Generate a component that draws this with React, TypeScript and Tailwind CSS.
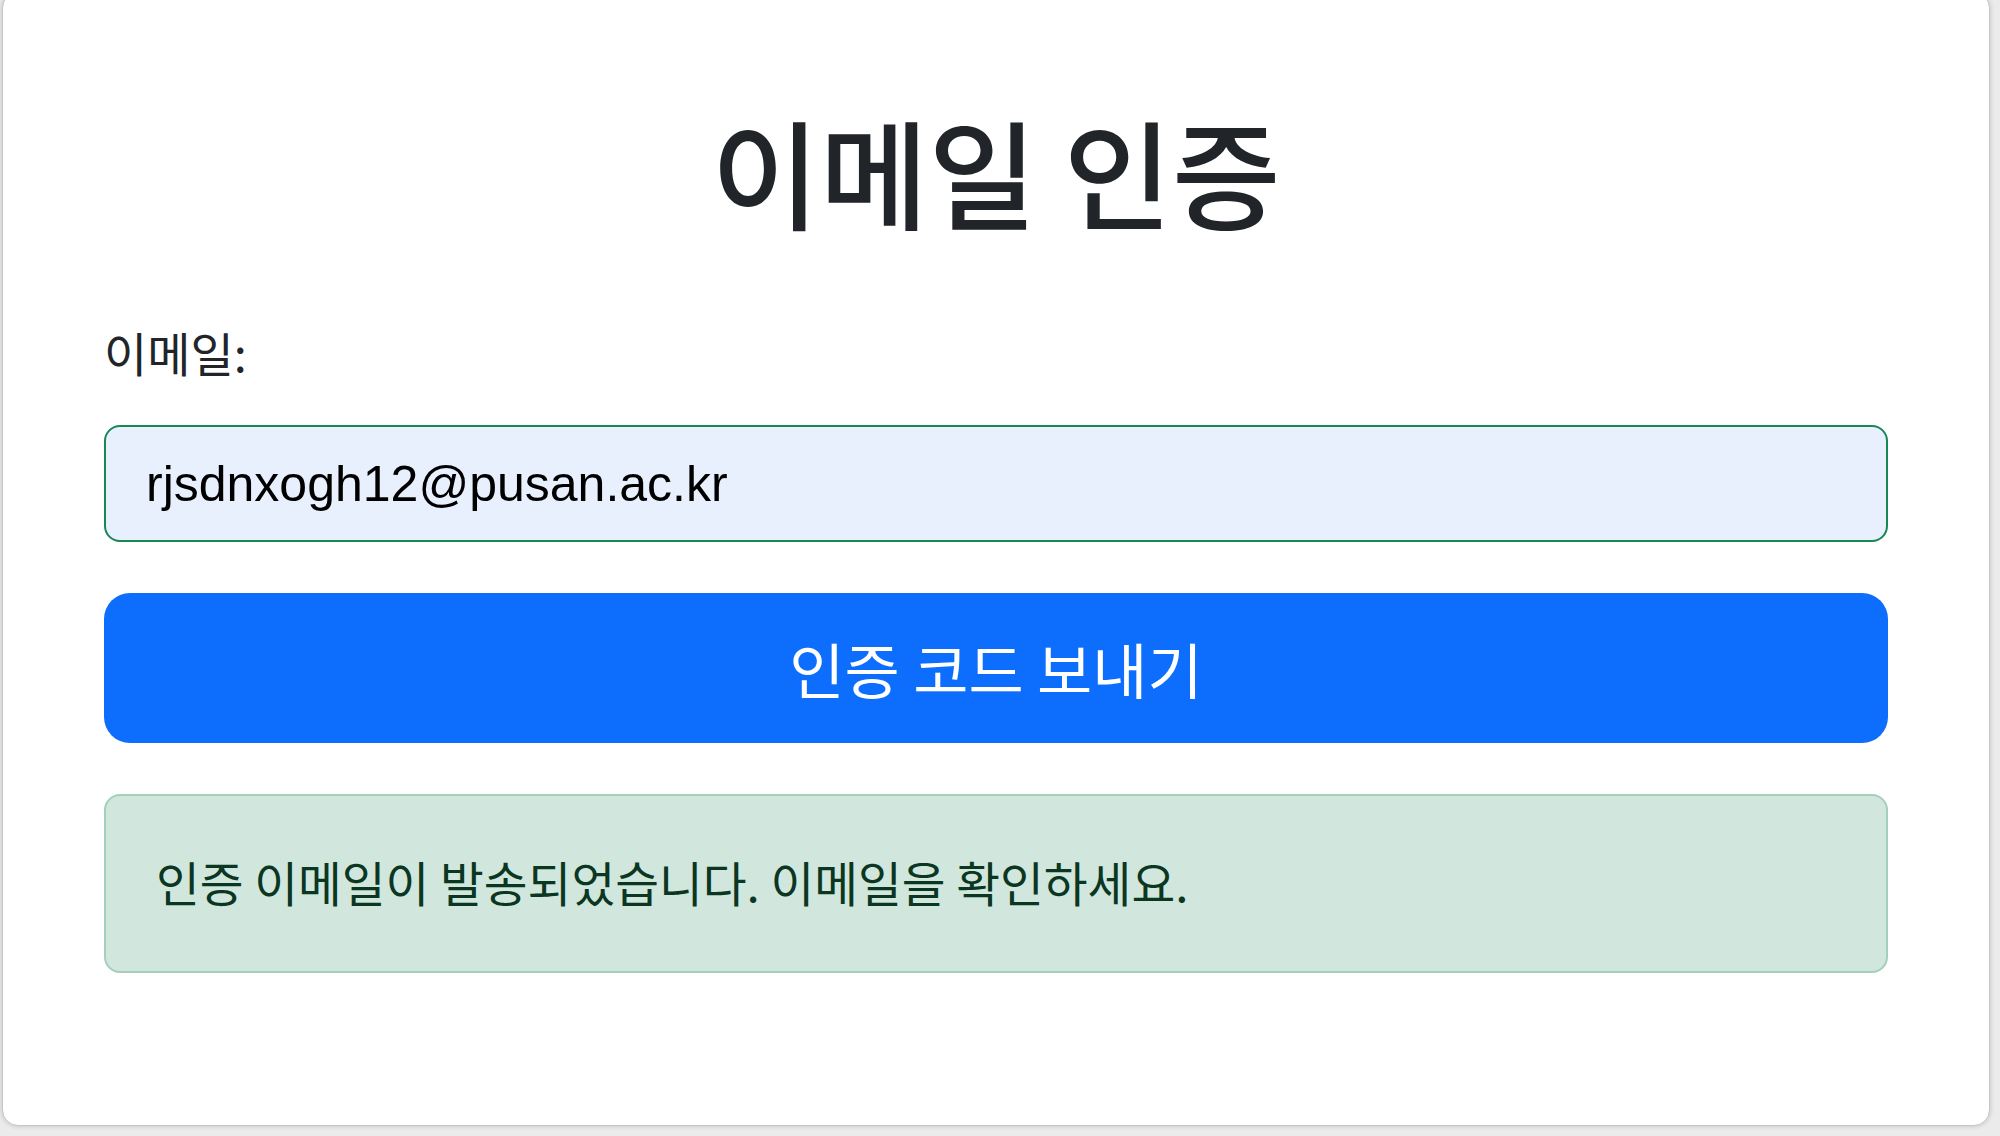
import React from "react";

export default function App() {
  const ko = { fontFamily: '"Noto Sans CJK KR", "Noto Sans", sans-serif' };
  return (
    <div className="w-[2000px] h-[1136px] overflow-hidden bg-[#ebebeb]">
      <div
        className="ml-[2px] -mt-[8px] w-[1988px] h-[1134px] bg-white border border-[#c6c6c6] rounded-[16px] shadow-[0_0_5px_rgba(0,0,0,0.18)] px-[101px] pt-[111px]"
        style={ko}
      >
        <h1 className="text-center text-[118px] leading-[132px] h-[132px] text-[#212529] font-medium">
          이메일 인증
        </h1>
        <div className="mt-[83px] text-[47px] leading-[66px] h-[66px] text-[#212529]">이메일:</div>
        <input
          readOnly
          defaultValue="rjsdnxogh12@pusan.ac.kr"
          className="mt-[40px] block w-full h-[117px] border-2 border-[#198754] rounded-[16px] bg-[#e8f0fe] pl-[40px] text-[50px] text-black outline-none"
          style={{ fontFamily: '"Liberation Sans", Arial, sans-serif' }}
        />
        <button className="mt-[51px] block w-full h-[150px] rounded-[26px] bg-[#0d6efd] text-white text-[60px]" style={ko}>
          인증 코드 보내기
        </button>
        <div className="mt-[51px] h-[179px] flex items-center border-2 border-[#a3cfbb] bg-[#d1e7dd] rounded-[16px] pl-[50px] pb-[4px] text-[47.6px] text-[#0a3622]">
          인증 이메일이 발송되었습니다. 이메일을 확인하세요.
        </div>
      </div>
    </div>
  );
}
